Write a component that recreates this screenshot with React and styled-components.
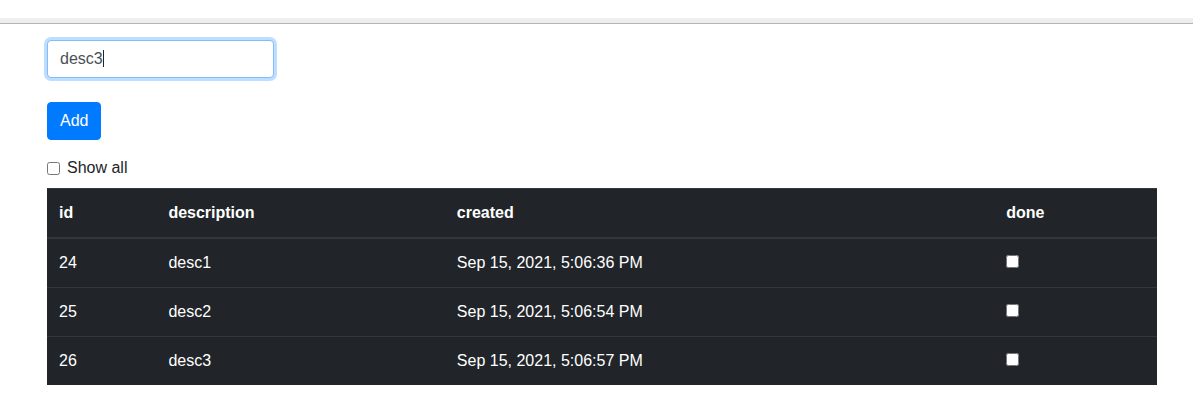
import React, { useEffect, useRef, useState } from 'react';
import styled, { createGlobalStyle } from 'styled-components';

const GlobalStyle = createGlobalStyle`
  *, *::before, *::after { box-sizing: border-box; }
  body {
    margin: 0;
    background: #fff;
    color: #212529;
    font-family: "Liberation Sans", Arial, sans-serif;
    font-size: 16px;
    line-height: 24px;
  }
`;

const Divider = styled.div`
  height: 6px;
  margin-top: 18px;
  background: #eee;
  border-bottom: 1px solid #b5b5b5;
`;

const Page = styled.main`
  padding: 16px 36px 24px 47px;
`;

const Form = styled.form`
  display: flex;
  flex-direction: column;
  align-items: flex-start;
  gap: 24px;
`;

const Field = styled.div`
  position: relative;
`;

const TextInput = styled.input`
  display: block;
  width: 227px;
  height: 38px;
  padding: 6px 12px;
  border: 1px solid #80bdff;
  border-radius: 4px;
  outline: 0;
  background: #fff;
  color: #495057;
  caret-color: transparent;
  font: inherit;
  box-shadow: 0 0 0 3px rgba(0, 123, 255, 0.25);
`;

const CaretLayer = styled.span`
  position: absolute;
  inset: 10px 13px;
  overflow: hidden;
  white-space: pre;
  line-height: 18px;
  color: transparent;
  pointer-events: none;

  &::before {
    content: attr(data-value);
  }
  &::after {
    content: "";
    display: inline-block;
    width: 1px;
    height: 17px;
    vertical-align: top;
    background: #212529;
  }
`;

const Button = styled.button`
  height: 38px;
  padding: 6px 12px;
  border: 1px solid #007bff;
  border-radius: 4px;
  background: #007bff;
  color: #fff;
  font: inherit;
  cursor: pointer;
`;

const Option = styled.div`
  display: flex;
  align-items: center;
  gap: 7px;
  margin: 16px 0 8px;
`;

const Checkbox = styled.input`
  display: inline-block;
  width: 13px;
  height: 13px;
  margin: 0;
`;

const Table = styled.table`
  width: 100%;
  border-collapse: collapse;
  background: #212529;
  color: #fff;
`;

const HeadCell = styled.th`
  padding: 12px;
  border-top: 1px solid #32383e;
  border-bottom: 2px solid #32383e;
  text-align: left;
`;

const Cell = styled.td`
  padding: 12px;
  border-top: 1px solid #32383e;
`;

const initialTasks = [
  { id: 24, description: 'desc1', created: 'Sep 15, 2021, 5:06:36 PM' },
  { id: 25, description: 'desc2', created: 'Sep 15, 2021, 5:06:54 PM' },
  { id: 26, description: 'desc3', created: 'Sep 15, 2021, 5:06:57 PM' },
];

export default function App() {
  const [text, setText] = useState('desc3');
  const inputRef = useRef(null);

  useEffect(() => {
    inputRef.current.focus();
  }, []);

  return (
    <>
      <GlobalStyle />
      <Divider />
      <Page>
        <Form onSubmit={(e) => e.preventDefault()}>
          <Field>
            <TextInput
              ref={inputRef}
              type="text"
              aria-label="description"
              value={text}
              onChange={(e) => setText(e.target.value)}
            />
            <CaretLayer data-value={text} aria-hidden="true" />
          </Field>
          <Button type="submit">Add</Button>
        </Form>
        <Option>
          <Checkbox type="checkbox" id="show-all" />
          <label htmlFor="show-all">Show all</label>
        </Option>
        <Table>
          <thead>
            <tr>
              <HeadCell scope="col">id</HeadCell>
              <HeadCell scope="col">description</HeadCell>
              <HeadCell scope="col">created</HeadCell>
              <HeadCell scope="col">done</HeadCell>
            </tr>
          </thead>
          <tbody>
            {initialTasks.map((task) => (
              <tr key={task.id}>
                <Cell>{task.id}</Cell>
                <Cell>{task.description}</Cell>
                <Cell>{task.created}</Cell>
                <Cell>
                  <Checkbox type="checkbox" aria-label={`${task.description} done`} />
                </Cell>
              </tr>
            ))}
          </tbody>
        </Table>
      </Page>
    </>
  );
}
